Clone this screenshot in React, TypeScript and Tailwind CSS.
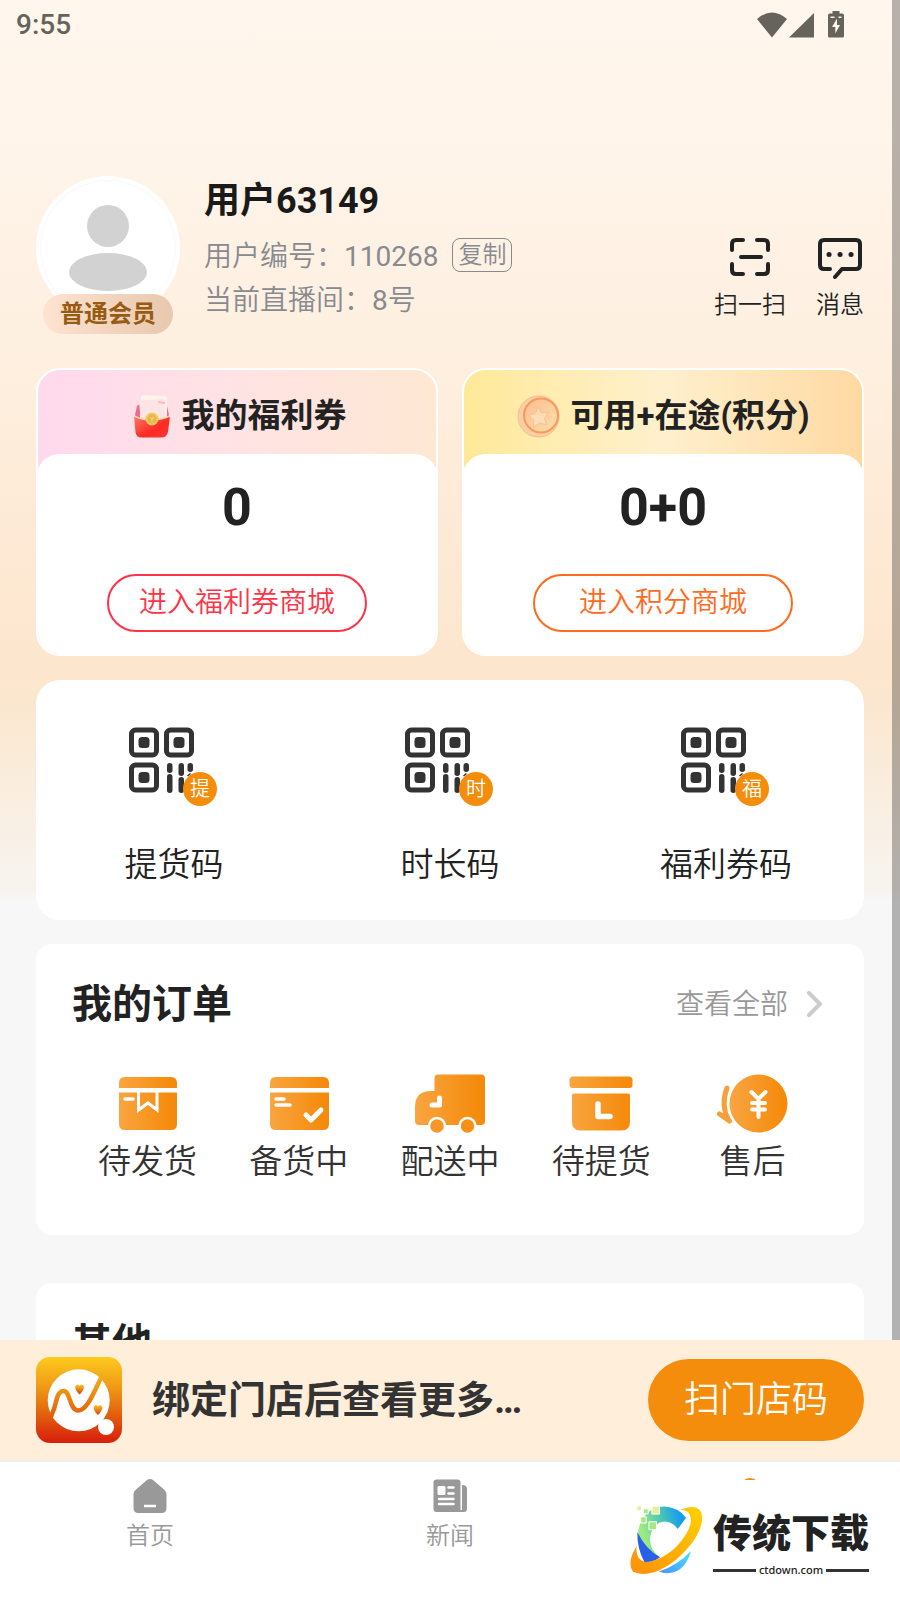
import type { ReactNode } from 'react';

interface BenefitCardProps {
  title: string;
  value: string;
  action: string;
  icon: ReactNode;
  cardClass: string;
  buttonClass: string;
}

/**
 * Signal, wifi and battery glyphs of the system bar
 */
function StatusBar() {
  return (
    <div className="flex h-[50px] items-center justify-between pr-[52px] pl-4 text-[#66625c]">
      <span className="text-[28px] font-medium leading-8">9:55</span>
      <div className="flex items-center">
        <svg className="h-7 w-8" viewBox="0 0 32 28" fill="currentColor">
          <path d="M1 8Q16-5 31 8L16 26.500Z" />
        </svg>
        <svg className="h-7 w-7" viewBox="0 0 28 28" fill="currentColor">
          <path d="M26 2v24.500H1Z" />
        </svg>
        <svg className="ml-2 h-7 w-6" viewBox="0 0 24 28" fill="currentColor">
          <path d="M8.500 0h7v2.500H18q2 0 2 2V25q0 1.500-1.500 1.500h-13Q4 26.500 4 25V4.500q0-2 2-2h2.500Z" />
          <path d="M13 7.500L8 16h3.300v6.500L16 14h-3ZM6.500 5.500h4v1.500h-4ZM14.500 5.500h3v1.500h-3Z" fill="#fff6ed" />
        </svg>
      </div>
    </div>
  );
}

function Avatar() {
  return (
    <div className="relative h-[158px] w-36 shrink-0">
      <svg className="h-36 w-36" viewBox="0 0 144 144">
        <circle cx="72" cy="72" r="72" fill="#fff" />
        <circle cx="72" cy="72" r="67.500" fill="none" stroke="#f8f8f8" strokeWidth="1" />
        <circle cx="72" cy="50" r="21" fill="#d2d2d2" />
        <ellipse cx="72" cy="96" rx="39" ry="19" fill="#d2d2d2" />
      </svg>
      <span className="absolute bottom-0 left-[7px] flex h-10 w-[130px] items-center justify-center rounded-full bg-linear-to-r from-[#fee3d1] to-[#e8c8ae] text-2xl font-bold text-[#985b12]">
        普通会员
      </span>
    </div>
  );
}

function ProfileHeader() {
  return (
    <header className="flex gap-6 pt-[126px]">
      <Avatar />
      <div className="flex-1 pt-0.5">
        <h1 className="text-[36px] font-bold leading-[46px] text-[#1a1a1a]">用户63149</h1>
        <div className="mt-[11px] flex items-center gap-[14px] text-[28px] leading-[44px] text-[#888a90]">
          <span>
            用户编号：<span className="font-normal">110268</span>
          </span>
          <button className="-mt-1 h-[34px] rounded-lg border border-[#888a90] px-[5px] text-2xl leading-8">复制</button>
        </div>
        <p className="text-[28px] leading-[44px] text-[#888a90]">
          当前直播间：<span className="font-normal">8</span>号
        </p>
      </div>
      <div className="flex items-start gap-[30px] pt-[58px] text-2xl leading-8 text-[#222]">
        <button className="flex flex-col items-center">
          <svg className="h-12 w-12" viewBox="0 0 48 48" fill="none" stroke="currentColor" strokeWidth="4" strokeLinecap="round">
            <path d="M6 16V10q0-4 4-4h7M31 6h7q4 0 4 4v6M42 30v6q0 4-4 4h-7M17 40h-7q-4 0-4-4v-6M15 23h20" />
          </svg>
          <span className="mt-[7px]">扫一扫</span>
        </button>
        <button className="flex flex-col items-center">
          <svg className="h-12 w-12" viewBox="0 0 48 48" fill="none" stroke="currentColor" strokeWidth="4" strokeLinecap="round" strokeLinejoin="round">
            <path d="M14 35H8q-4 0-4-4V10q0-4 4-4h32q4 0 4 4v21q0 4-4 4H26l-7 8" />
            <path d="M13 20.500h.1M24 20.500h.1M35 20.500h.1" strokeWidth="5" />
          </svg>
          <span className="mt-[7px]">消息</span>
        </button>
      </div>
    </header>
  );
}

function RedPacketIcon() {
  return (
    <svg className="h-11 w-11" viewBox="0 0 44 44">
      <defs>
        <linearGradient id="packet" x1="0" y1="0" x2="1" y2="1">
          <stop offset="0" stopColor="#ff7a6a" />
          <stop offset="0.6" stopColor="#fb2a22" />
          <stop offset="1" stopColor="#f43a3a" />
        </linearGradient>
      </defs>
      <path d="M7 21l2-9 4-3h22l4 3 2 9-4 6H10Z" fill="#ee6a92" />
      <path d="M13 3q0-2 3-2l20 1q3 0 3 3v20H12Z" fill="#fdf3e8" />
      <path d="M11 9q0-2 3-2.500l20-1.500q3 0 3 3v18H13Z" fill="#fde4e4" />
      <path d="M30 7l7 1-.5 2-6.500-1Z" fill="#fbb8c0" />
      <path d="M6 22q8 4 17.500 4T42 22l-2 16q-1 5.500-7 5.500H14q-6 0-6.500-5.500Z" fill="url(#packet)" />
      <path d="M6 22q8 4 17.500 4T42 22" fill="none" stroke="#fcd9a0" strokeWidth="1.500" />
      <circle cx="24" cy="25" r="6.500" fill="#f2c864" />
      <circle cx="24" cy="25" r="4.500" fill="#ebb548" />
      <path d="M22 23l2 2 2-2M24 25v3" fill="none" stroke="#f7d787" strokeWidth="1" />
    </svg>
  );
}

function CoinIcon() {
  return (
    <svg className="h-11 w-11" viewBox="0 0 44 44">
      <defs>
        <linearGradient id="coin" x1="0" y1="0" x2="1" y2="1">
          <stop offset="0" stopColor="#fcbd90" />
          <stop offset="1" stopColor="#fde0a8" />
        </linearGradient>
      </defs>
      <circle cx="24" cy="21.500" r="20.500" fill="#fde3bc" />
      <circle cx="22.500" cy="22.500" r="20.500" fill="#fbcfa4" stroke="#f8b98a" strokeWidth="1" />
      <circle cx="25" cy="21.500" r="17" fill="url(#coin)" stroke="#f79a5e" strokeWidth="2" />
      <path d="M22 13l3.500 6 7-1-4 6 2.500 7-7.500-2-6 4v-7l-5-5 7-1.500Z" fill="#fddcb6" stroke="#fac095" strokeWidth="1" strokeLinejoin="round" />
    </svg>
  );
}

function BenefitCard({ title, value, action, icon, cardClass, buttonClass }: BenefitCardProps) {
  return (
    <section className={`flex-1 overflow-hidden rounded-3xl border-2 border-white ${cardClass}`}>
      <h2 className="flex h-[84px] items-center justify-center gap-2.5 pt-2 text-[33px] font-bold text-[#222]">
        {icon}
        {title}
      </h2>
      <div className="-mx-0.5 flex flex-col items-center rounded-t-3xl bg-white pt-6 pb-[22px]">
        <p className="text-[52px] font-bold leading-[60px] text-[#222]">{value}</p>
        <button className={`mt-9 h-[58px] w-[260px] rounded-full border-2 text-[28px] leading-[52px] ${buttonClass}`}>
          {action}
        </button>
      </div>
    </section>
  );
}

const CODES = [
  { label: '提货码', mark: '提' },
  { label: '时长码', mark: '时' },
  { label: '福利券码', mark: '福' },
];

function CodeCard() {
  return (
    <section className="mt-6 flex rounded-3xl bg-white pt-10 pb-[33px]">
      {CODES.map((code) => (
        <button key={code.mark} className="flex flex-1 flex-col items-center">
          <span className="relative">
            <svg className="h-[90px] w-[90px]" viewBox="0 0 90 90" fill="none" stroke="#333" strokeWidth="5">
              <rect x="2.500" y="10" width="25" height="25" rx="4" />
              <rect x="37.500" y="10" width="25" height="25" rx="4" />
              <rect x="2.500" y="45" width="25" height="25" rx="4" />
              <g fill="#333" stroke="none">
                <rect x="9.500" y="17" width="11" height="11" rx="3.500" />
                <rect x="44.500" y="17" width="11" height="11" rx="3.500" />
                <rect x="9.500" y="52" width="11" height="11" rx="3.500" />
                <rect x="38" y="43" width="5.500" height="10" rx="2.700" />
                <rect x="38" y="54" width="5.500" height="19" rx="2.700" />
                <rect x="49.500" y="43" width="5.500" height="13" rx="2.700" />
                <rect x="49.500" y="57" width="5.500" height="16" rx="2.700" />
                <rect x="58.500" y="43" width="5.500" height="9" rx="2.700" />
                <path d="M58.500 56l3-2.500" stroke="#333" strokeWidth="1.500" />
              </g>
            </svg>
            <span className="absolute right-0.5 bottom-1 flex h-[34px] w-[34px] items-center justify-center rounded-full bg-[#f58d0c] text-xl text-white">
              {code.mark}
            </span>
          </span>
          <span className="mt-[33px] text-[33px] leading-[44px] text-[#222]">{code.label}</span>
        </button>
      ))}
    </section>
  );
}

const ORDERS: { label: string; icon: ReactNode }[] = [
  {
    label: '待发货',
    icon: (
      <>
        <path d="M7 15v-5q0-6 6-6h46q6 0 6 6v5ZM7 19.500h58V51q0 6-6 6H13q-6 0-6-6Z" fill="url(#orange)" />
        <path d="M26.500 17v20l9.500-7 9 7V17" fill="none" stroke="#fff" strokeWidth="3" />
        <path d="M13 26h8" stroke="#fff" strokeWidth="3.500" strokeLinecap="round" />
      </>
    ),
  },
  {
    label: '备货中',
    icon: (
      <>
        <path d="M7 15v-5q0-6 6-6h47q6 0 6 6v5ZM7 19.500h59V51q0 6-6 6H13q-6 0-6-6Z" fill="url(#orange)" />
        <path d="M13 26h8M13 32h14" stroke="#fff" strokeWidth="3.500" strokeLinecap="round" />
        <path d="M43 42l5 5 10-10" fill="none" stroke="#fff" strokeWidth="5" strokeLinecap="round" strokeLinejoin="round" />
      </>
    ),
  },
  {
    label: '配送中',
    icon: (
      <>
        <path d="M24 1.500h43q4 0 4 4V48q0 4-4 4H5q-4 0-4-4V34Q1 18 17 18h3.500V5.500q0-4 3.500-4Z" fill="url(#orange)" />
        <path d="M25.500 25v7H18" fill="none" stroke="#fff" strokeWidth="5" strokeLinecap="round" strokeLinejoin="round" />
        <circle cx="23" cy="53" r="8" fill="#f69725" stroke="#fff" strokeWidth="2.500" />
        <circle cx="53.500" cy="53" r="8" fill="#f69017" stroke="#fff" strokeWidth="2.500" />
      </>
    ),
  },
  {
    label: '待提货',
    icon: (
      <>
        <path d="M8 3.500h56q3.500 0 3.500 3.500v5q0 3-3 3h-57q-3 0-3-3V7q0-3.500 3.500-3.500ZM9 20.500h54q2 0 2 2V49q0 8.500-8.500 8.500h-41Q7 57.500 7 49V22.500q0-2 2-2Z" fill="url(#orange)" />
        <path d="M33 31v12.500h12" fill="none" stroke="#fff" strokeWidth="5.500" strokeLinecap="round" strokeLinejoin="round" />
      </>
    ),
  },
  {
    label: '售后',
    icon: (
      <>
        <circle cx="42.500" cy="30.500" r="29" fill="url(#orange)" />
        <path d="M11 15Q4.500 32 12.500 47M3.500 41l10 7" fill="none" stroke="#f7a03a" strokeWidth="5" strokeLinecap="round" />
        <path d="M35.500 19l7 7 7-7M42.500 26v18M36 30h13M36 36.500h13" fill="none" stroke="#fff" strokeWidth="4" strokeLinecap="round" />
      </>
    ),
  },
];

function OrdersCard() {
  return (
    <section className="mt-6 rounded-2xl bg-white px-9 pt-[38px] pb-[51px]">
      <div className="flex items-center justify-between">
        <h2 className="text-[40px] font-bold leading-[46px] text-[#222]">我的订单</h2>
        <a href="#orders" className="flex items-center gap-4 text-[28px] leading-[46px] text-[#999]">
          查看全部
          <svg className="h-7 w-6" viewBox="0 0 24 28" fill="none" stroke="#ccc" strokeWidth="4" strokeLinecap="round" strokeLinejoin="round">
            <path d="M5 2l11 11L5 24" />
          </svg>
        </a>
      </div>
      <div className="mt-[45px] flex">
        {ORDERS.map((order) => (
          <a key={order.label} href="#orders" className="flex flex-1 flex-col items-center">
            <svg className="h-[60px] w-[72px] overflow-visible" viewBox="0 0 72 60">
              <defs>
                <linearGradient id="orange" x1="0" x2="1" y1="0" y2="0">
                  <stop offset="0" stopColor="#f9a541" />
                  <stop offset="0.9" stopColor="#f58b0c" />
                </linearGradient>
              </defs>
              {order.icon}
            </svg>
            <span className="mt-[7px] text-[33px] leading-[44px] text-[#333]">{order.label}</span>
          </a>
        ))}
      </div>
    </section>
  );
}

function AppLogo() {
  return (
    <svg className="h-[86px] w-[86px] shrink-0" viewBox="0 0 86 86">
      <defs>
        <linearGradient id="brand" gradientUnits="userSpaceOnUse" x1="0" y1="0" x2="0" y2="86">
          <stop offset="0" stopColor="#fdca1c" />
          <stop offset="0.35" stopColor="#ef9a16" />
          <stop offset="0.65" stopColor="#e2640d" />
          <stop offset="1" stopColor="#d81c0c" />
        </linearGradient>
        <linearGradient id="heart" x1="0" y1="0" x2="0" y2="1">
          <stop offset="0" stopColor="#fbc51c" />
          <stop offset="1" stopColor="#dc3a0c" />
        </linearGradient>
      </defs>
      <rect width="86" height="86" rx="14" fill="url(#brand)" />
      <circle cx="42.700" cy="43.300" r="31" fill="#fff" />
      <path d="M14 62Q19 51 21 41Q23.500 33.500 28 34C35 35 33 53.500 42.500 53.500C52 53 58 34 67 17" fill="none" stroke="url(#brand)" strokeWidth="4.500" />
      <path d="M43.600 37.500C40 34 38.800 31 39.500 29Q41.500 26 43.600 29Q45.700 26 47.700 29C48.400 31 47.200 34 43.600 37.500Z" fill="url(#heart)" />
      <path d="M62 58C58.400 54.500 57.200 51.500 57.900 49.500Q59.900 46.500 62 49.500Q64.100 46.500 66.100 49.500C66.800 51.500 65.600 54.500 62 58Z" fill="url(#heart)" />
      <circle cx="70" cy="70" r="8" fill="#fff" />
    </svg>
  );
}

function BindStoreBar() {
  return (
    <div className="flex h-[120px] shrink-0 items-center bg-[#ffeeda] px-9">
      <AppLogo />
      <p className="ml-[30px] flex-1 truncate text-[38px] font-bold leading-[56px] text-[#333]">绑定门店后查看更多…</p>
      <button className="h-[82px] w-[216px] rounded-full bg-[#f58d0c] text-[36px] text-white">扫门店码</button>
    </div>
  );
}

function Watermark() {
  return (
    <div className="absolute right-0 bottom-0 flex h-[120px] w-1/3 items-center bg-white pl-7">
      <svg className="h-[74px] w-[78px] shrink-0" viewBox="85 549 235 220">
        <defs>
          <linearGradient id="leaf" x1="0" y1="0.5" x2="1" y2="0.2">
            <stop offset="0.1" stopColor="#9bea82" />
            <stop offset="0.5" stopColor="#4cc9b0" />
            <stop offset="0.9" stopColor="#169bf2" />
          </linearGradient>
          <linearGradient id="sweep" x1="0" y1="1" x2="1" y2="0">
            <stop offset="0.1" stopColor="#ff9508" />
            <stop offset="1" stopColor="#ffd200" />
          </linearGradient>
          <linearGradient id="wave" x1="0" y1="1" x2="1" y2="0">
            <stop offset="0" stopColor="#4a90ff" />
            <stop offset="1" stopColor="#45e6ff" />
          </linearGradient>
        </defs>
        <path d="M260 592Q235 560 195 558Q150 560 125 600Q105 650 125 680Q145 705 180 712Q148 685 152 650Q158 608 195 603Q220 604 235 626Z" fill="url(#leaf)" />
        <path d="M113 635Q112 685 135 727Q160 727 182 711Q140 690 113 635Z" fill="#2860ea" />
        <path d="M275 692Q258 750 215 758Q195 762 178 754Q235 735 275 692Z" fill="url(#wave)" />
        <path d="M241 569Q290 548 305 575Q318 610 280 665Q235 725 180 750Q130 770 100 755Q80 725 112 676Q105 715 135 725Q180 725 230 680Q285 620 272 585Q265 568 241 569Z" fill="url(#sweep)" />
        <g stroke="#fff" strokeWidth="3">
          <path d="M157 557h23v24h-23ZM112 556h13v15h-13Z" fill="#e4f093" />
          <path d="M131 565h15v15h-15ZM123 589h17v19h-17ZM148 604h23v24h-23Z" fill="#a9e889" />
        </g>
      </svg>
      <div className="ml-[7px] pt-2">
        <p className="text-[39px] font-black leading-[48px] text-[#222]">传统下载</p>
        <p className="mt-1 flex items-center gap-[3px] font-['Noto_Sans'] text-[11px] font-medium leading-4 text-[#222]">
          <span className="h-[3px] flex-1 bg-[#333]" />
          ctdown.com
          <span className="h-[3px] flex-1 bg-[#333]" />
        </p>
      </div>
    </div>
  );
}

function TabBar() {
  return (
    <nav className="relative flex h-[140px] shrink-0 border-t-2 border-[#eee] bg-white pt-3.5 text-2xl leading-8 text-[#999]">
      <a href="#home" className="flex flex-1 flex-col items-center gap-1">
        <svg className="h-10 w-10" viewBox="0 0 40 40" fill="currentColor">
          <path d="M17 4q3-2 6 0l11 9.500q2.500 2 2.500 5V32q0 5-5 5h-23q-5 0-5-5V18.500q0-3 2.500-5Z" />
          <path d="M14 30h12" stroke="#fff" strokeWidth="2.500" />
        </svg>
        首页
      </a>
      <a href="#news" className="flex flex-1 flex-col items-center gap-1">
        <svg className="h-10 w-10" viewBox="0 0 40 40" fill="currentColor">
          <path d="M6.500 3.500h21q3 0 3 3V34h1.500V9q5 0 5 4v20q0 3-3 3h-27.500q-3 0-3-3V6.500q0-3 3-3Z" />
          <rect x="7.500" y="10" width="8" height="9" rx="1.500" fill="#fff" />
          <path d="M18.500 11.500h5M18.500 17.500h5M9 23h14.500M9 28h14.500" stroke="#fff" strokeWidth="2.500" strokeLinecap="round" />
        </svg>
        新闻
      </a>
      <a href="#mine" aria-label="我的" className="flex flex-1 flex-col items-center">
        <svg className="h-10 w-10" viewBox="0 0 40 40" fill="#f58d0c">
          <circle cx="20" cy="12" r="10" />
          <path d="M4 38q0-15 16-15t16 15Z" />
        </svg>
      </a>
      <Watermark />
    </nav>
  );
}

export default function App() {
  return (
    <div className="flex h-screen flex-col font-[Roboto,'Noto_Sans_CJK_SC',sans-serif] font-[350]">
      <main className="relative min-h-0 flex-1 overflow-hidden bg-[linear-gradient(180deg,#fff6ed_0px,#fff5eb_120px,#fef0e1_330px,#fde6ce_660px,#fbe7cf_700px,#f7f4f0_890px,#f7f7f7_900px)]">
        <StatusBar />
        <div className="px-9">
          <ProfileHeader />
          <div className="mt-[34px] flex gap-6">
            <BenefitCard
              title="我的福利券"
              value="0"
              action="进入福利券商城"
              icon={<RedPacketIcon />}
              cardClass="bg-linear-to-r from-[#ffd9ee] via-[#ffe3e4] to-[#fee8d3]"
              buttonClass="border-[#ff3347] text-[#ff3347]"
            />
            <BenefitCard
              title="可用+在途(积分)"
              value="0+0"
              action="进入积分商城"
              icon={<CoinIcon />}
              cardClass="bg-linear-to-r from-[#ffe998] via-[#fff0cd] to-[#ffd9a2]"
              buttonClass="border-[#ff6a1c] text-[#ff6a1c]"
            />
          </div>
          <CodeCard />
          <OrdersCard />
          <section className="mt-12 rounded-2xl bg-white px-9 py-[38px]">
            <h2 className="text-[40px] font-bold leading-[46px] text-[#222]">其他</h2>
          </section>
        </div>
        {/* Scroll thumb */}
        <div className="absolute inset-y-0 right-0 w-2 bg-black/28" />
      </main>
      <BindStoreBar />
      <TabBar />
    </div>
  );
}
